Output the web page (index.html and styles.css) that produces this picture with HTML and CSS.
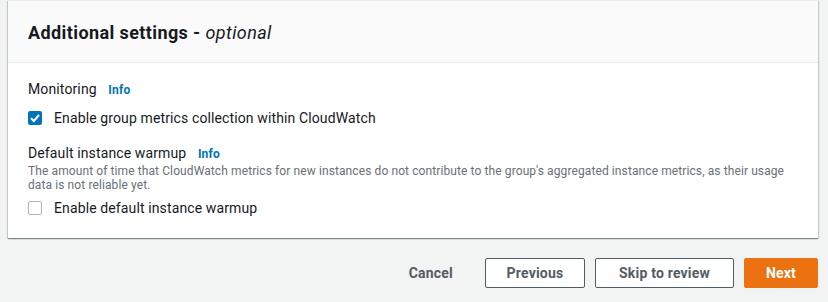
FILE: index.html
```html
<!DOCTYPE html>
<html>
<head>
<meta charset="utf-8">
<link rel="stylesheet" href="styles.css">
</head>
<body>
<div class="page">
  <section class="card">
    <header class="card-header">
      <h2 class="title">Additional settings - <i>optional</i></h2>
    </header>
    <div class="card-body">
      <div class="field">
        <div class="label">Monitoring <a class="info">Info</a></div>
        <label class="check">
          <span class="box checked">
            <svg width="14" height="14" viewBox="0 0 14 14"><path d="M3 7.2 L5.9 10 L11 4" fill="none" stroke="#fff" stroke-width="2"/></svg>
          </span>
          <span class="check-text">Enable group metrics collection within CloudWatch</span>
        </label>
      </div>
      <div class="field field2">
        <div class="label">Default instance warmup <a class="info">Info</a></div>
        <div class="desc">The amount of time that CloudWatch metrics for new instances do not contribute to the group's aggregated instance metrics, as their usage data is not reliable yet.</div>
        <label class="check check2">
          <span class="box"></span>
          <span class="check-text">Enable default instance warmup</span>
        </label>
      </div>
    </div>
  </section>
  <div class="actions">
    <button class="btn link">Cancel</button>
    <button class="btn normal prev">Previous</button>
    <button class="btn normal skip">Skip to review</button>
    <button class="btn primary">Next</button>
  </div>
</div>
</body>
</html>
```
FILE: styles.css
```css
html, body {
  margin: 0;
  padding: 0;
  background: #f2f3f3;
  font-family: Roboto, "Noto Sans", sans-serif;
  color: #16191f;
}
.page {
  padding: 0 10px 0 8px;
}
.card {
  background: #fff;
  box-shadow: 0 1px 1px 0 rgba(0,28,36,0.3), 1px 1px 1px 0 rgba(0,28,36,0.15), -1px 1px 1px 0 rgba(0,28,36,0.15);
  border-top: 1px solid #eaeded;
}
.card-header {
  background: #fafafa;
  border-bottom: 1px solid #eaeded;
  height: 61px;
  padding: 0 20px;
  display: flex;
  align-items: center;
}
.title {
  margin: 0;
  font-size: 18px;
  font-weight: 700;
  line-height: 22px;
  padding-top: 2px;
  letter-spacing: 0.4px;
}
.title i {
  font-weight: 400;
}
.card-body {
  padding: 15px 20px 19px;
}
.label {
  font-size: 14px;
  line-height: 22px;
  color: #16191f;
  letter-spacing: 0.12px;
}
.info {
  font-size: 12px;
  font-weight: 700;
  color: #0073bb;
  margin-left: 8px;
  letter-spacing: 0.2px;
}
.check {
  display: flex;
  align-items: center;
  margin-top: 6px;
  font-size: 14px;
  line-height: 22px;
  letter-spacing: 0.12px;
}
.box {
  width: 12px;
  height: 12px;
  border: 1px solid #aab7b8;
  border-radius: 2px;
  margin-right: 12px;
  display: inline-flex;
  align-items: center;
  justify-content: center;
  background: #fff;
}
.box.checked {
  width: 14px;
  height: 14px;
  border: none;
  background: #0073bb;
}
.field2 {
  margin-top: 13px;
}
.desc {
  font-size: 12px;
  line-height: 14px;
  color: #687078;
  margin-top: -1px;
  letter-spacing: 0.1px;
}
.check2 {
  margin-top: 5px;
}
.actions {
  display: flex;
  justify-content: flex-end;
  align-items: center;
  gap: 10px;
  margin-top: 20px;
}
.btn {
  font-family: inherit;
  font-size: 14px;
  font-weight: 700;
  height: 30px;
  border-radius: 2px;
  padding: 0 18px;
  cursor: pointer;
  letter-spacing: 0.2px;
}
.link {
  background: transparent;
  border: 1px solid transparent;
  color: #545b64;
  margin-right: 3px;
}
.normal {
  background: #fff;
  border: 1px solid #545b64;
  color: #545b64;
}
.prev { width: 100px; }
.skip { width: 139px; }
.primary {
  background: #ec7211;
  border: 1px solid #ec7211;
  color: #fff;
  width: 74px;
}
```
